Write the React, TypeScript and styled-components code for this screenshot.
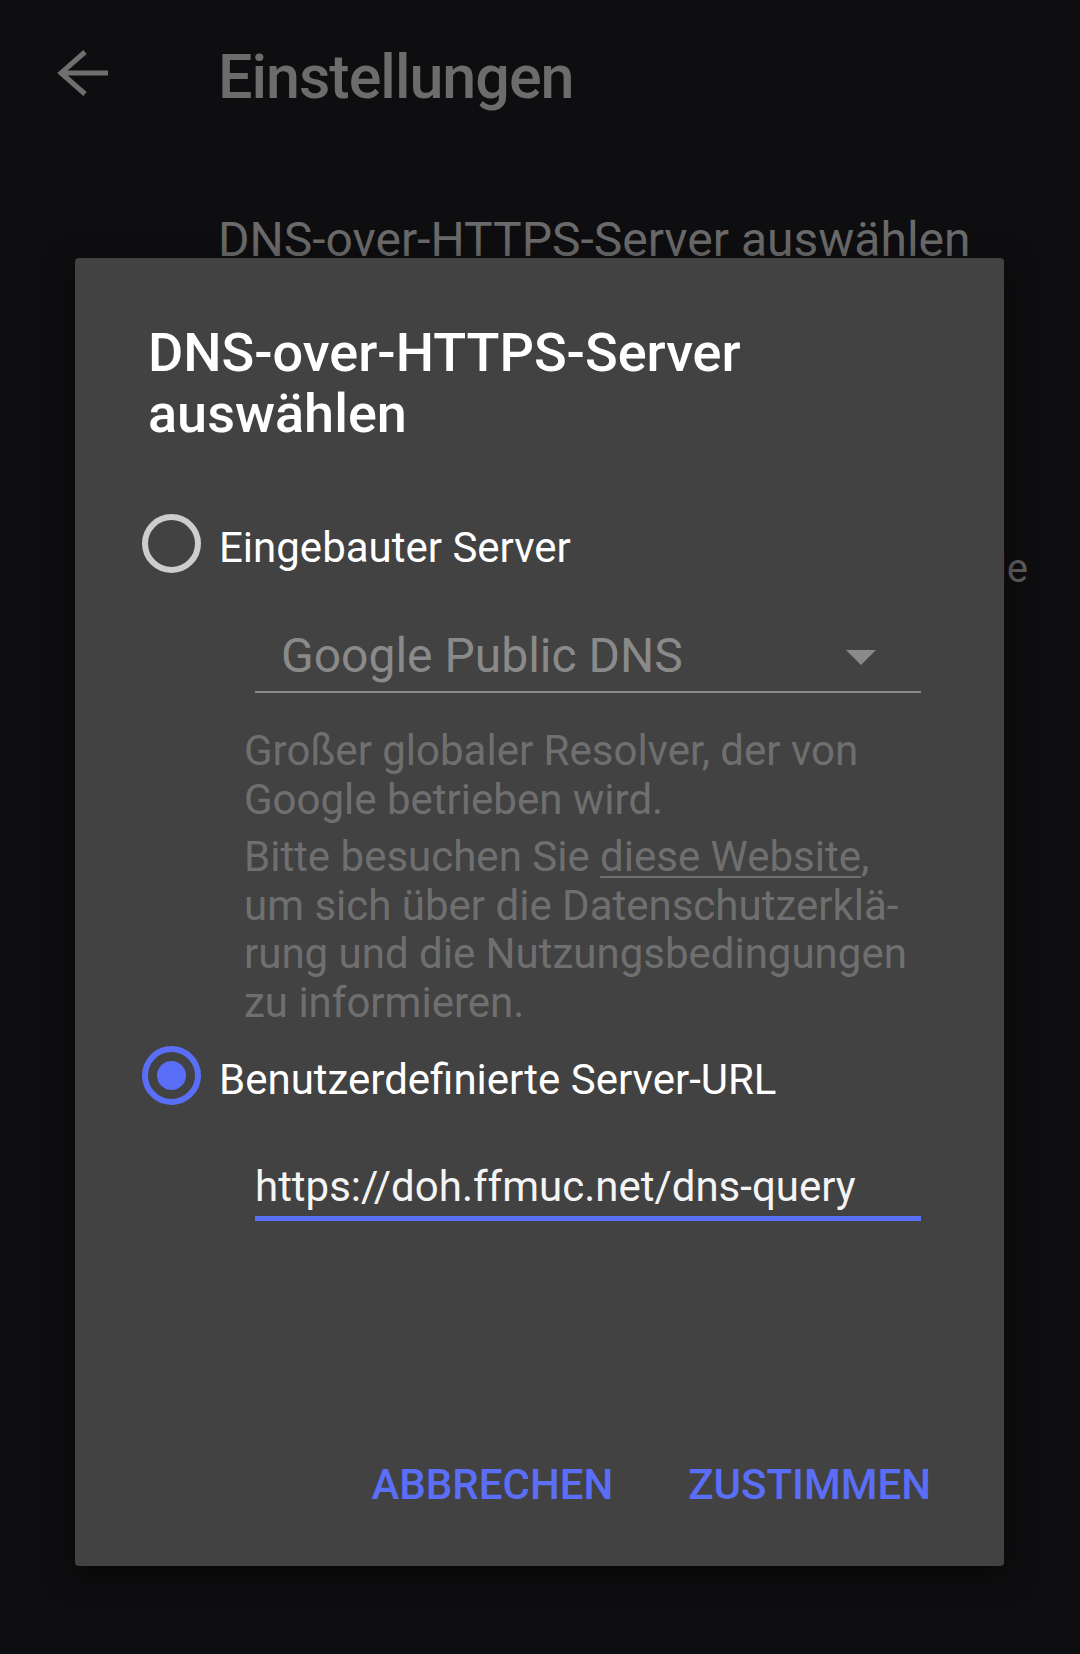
import React, {useState} from 'react';
import styled, {createGlobalStyle} from 'styled-components'

const GlobalStyle = createGlobalStyle`
  html, body {
    margin: 0;
    padding: 0;
    background: #0e0e10;
  }

  body {
    font-family: Roboto, "Liberation Sans", sans-serif;
  }
`

const Screen = styled.div`
  position: relative;
  width: 1080px;
  height: 1654px;
  overflow: hidden;
  background: #0e0e10;
`

const Toolbar = styled.header`
  display: flex;
  align-items: flex-start;
  padding: 41px 0 0 52px;
`

const BackButton = styled.button`
  width: 64px;
  height: 64px;
  padding: 0;
  border: none;
  background: transparent;
  color: #6f6f6f;
  cursor: pointer;
`

const ToolbarTitle = styled.h1`
  margin: 4px 0 0 102px;
  font-size: 61px;
  line-height: 64px;
  font-weight: 500;
  color: #6c6c6c;
  letter-spacing: -1px;
`

const SettingsList = styled.div`
  display: flex;
  flex-direction: column;
  padding: 0 52px 0 218px;
`

const SettingTitle = styled.div`
  margin-top: 103px;
  font-size: 48px;
  line-height: 56px;
  color: #6a6a6a;
`

const SettingSummary = styled.div`
  margin-top: 277px;
  font-size: 40px;
  line-height: 48px;
  color: #5e5e5e;
  text-align: right;
  white-space: nowrap;
`

const Dialog = styled.div`
  position: absolute;
  left: 75px;
  top: 258px;
  width: 929px;
  height: 1308px;
  box-sizing: border-box;
  padding: 64px 73px 56px 67px;
  display: flex;
  flex-direction: column;
  background: #424242;
  border-radius: 4px;
  box-shadow: 0 8px 30px rgba(0, 0, 0, .5);
`

const DialogTitle = styled.h2`
  margin: 0 0 0 6px;
  font-size: 54px;
  line-height: 61px;
  font-weight: 500;
  color: #ffffff;
`

const Option = styled.label<{ $top: number }>`
  display: flex;
  align-items: flex-start;
  margin-top: ${p => p.$top}px;
  cursor: pointer;
`

const RadioRing = styled.span<{ $checked: boolean }>`
  box-sizing: border-box;
  width: 59px;
  height: 59px;
  border-radius: 50%;
  border: 6px solid ${p => p.$checked ? '#5b6ef7' : '#cdcdcd'};
  display: flex;
  align-items: center;
  justify-content: center;
  flex-shrink: 0;

  &::after {
    content: "";
    display: ${p => p.$checked ? 'block' : 'none'};
    width: 29px;
    height: 29px;
    border-radius: 50%;
    background: #5b6ef7;
  }
`

const OptionLabel = styled.span`
  margin-left: 18px;
  padding-top: 4px;
  font-size: 42px;
  line-height: 59px;
  color: #ffffff;
`

const Indented = styled.div`
  margin: 0 10px 0 113px;
  display: flex;
  flex-direction: column;
`

const Select = styled.div`
  margin-top: 50px;
  display: flex;
  align-items: center;
  justify-content: space-between;
  padding: 0 45px 6px 26px;
  border-bottom: 2px solid #8a8a8a;
  font-size: 48px;
  line-height: 58px;
  color: #8a8a8a;
`

const Caret = styled.span`
  width: 0;
  height: 0;
  margin-top: 2px;
  border-left: 15px solid transparent;
  border-right: 15px solid transparent;
  border-top: 15px solid #8a8a8a;
`

const Description = styled.div`
  margin: 34px 0 0 -11px;
  font-size: 42px;
  line-height: 48.5px;
  color: #6f6f6f;

  & p {
    margin: 0 0 9px;
  }

  & a {
    color: inherit;
    text-decoration: underline;
    text-underline-offset: 5px;
    text-decoration-thickness: 2px;
  }
`

const UrlInput = styled.input`
  margin-top: 49px;
  padding: 0 0 2px;
  width: 100%;
  box-sizing: border-box;
  border: none;
  border-bottom: 5px solid #5b6ef7;
  background: transparent;
  font-family: Roboto, "Liberation Sans", sans-serif;
  font-size: 42px;
  line-height: 56px;
  height: 63px;
  color: #f4f4f4;
  outline: none;
`

const Actions = styled.div`
  margin-top: auto;
  display: flex;
  justify-content: flex-end;
  gap: 75px;
`

const TextButton = styled.button`
  padding: 0;
  border: none;
  background: transparent;
  font-family: Roboto, "Liberation Sans", sans-serif;
  font-size: 42px;
  line-height: 50px;
  font-weight: 500;
  color: #5b6ef7;
  cursor: pointer;
`

function App() {

    const [custom, setCustom] = useState(true)
    const [url, setUrl] = useState("https://doh.ffmuc.net/dns-query")

    return (
        <>
            <GlobalStyle/>
            <Screen>
                <Toolbar>
                    <BackButton aria-label="Zurück">
                        <svg width="64" height="64" viewBox="0 0 64 64" fill="none" stroke="currentColor" strokeWidth="5">
                            <path d="M10 32H56"/>
                            <path d="M33 11L9 32L33 53"/>
                        </svg>
                    </BackButton>
                    <ToolbarTitle>Einstellungen</ToolbarTitle>
                </Toolbar>

                <SettingsList>
                    <SettingTitle>DNS-over-HTTPS-Server auswählen</SettingTitle>
                    <SettingSummary>DNS-Server verwende</SettingSummary>
                </SettingsList>

                <Dialog role="dialog">
                    <DialogTitle>DNS-over-HTTPS-Server<br/>auswählen</DialogTitle>

                    <Option $top={70} onClick={() => setCustom(false)}>
                        <RadioRing $checked={!custom}/>
                        <OptionLabel>Eingebauter Server</OptionLabel>
                    </Option>

                    <Indented>
                        <Select>
                            <span>Google Public DNS</span>
                            <Caret/>
                        </Select>
                        <Description>
                            <p>Großer globaler Resolver, der von<br/>Google betrieben wird.</p>
                            <p>Bitte besuchen Sie <a href="#">diese Website</a>,<br/>um sich über die Datenschutzerklä-<br/>rung und die Nutzungsbedingungen<br/>zu informieren.</p>
                        </Description>
                    </Indented>

                    <Option $top={10} onClick={() => setCustom(true)}>
                        <RadioRing $checked={custom}/>
                        <OptionLabel>Benutzerdefinierte Server-URL</OptionLabel>
                    </Option>

                    <Indented>
                        <UrlInput value={url} onChange={e => setUrl(e.target.value)}/>
                    </Indented>

                    <Actions>
                        <TextButton>ABBRECHEN</TextButton>
                        <TextButton>ZUSTIMMEN</TextButton>
                    </Actions>
                </Dialog>
            </Screen>
        </>
    );
}

export default App;
